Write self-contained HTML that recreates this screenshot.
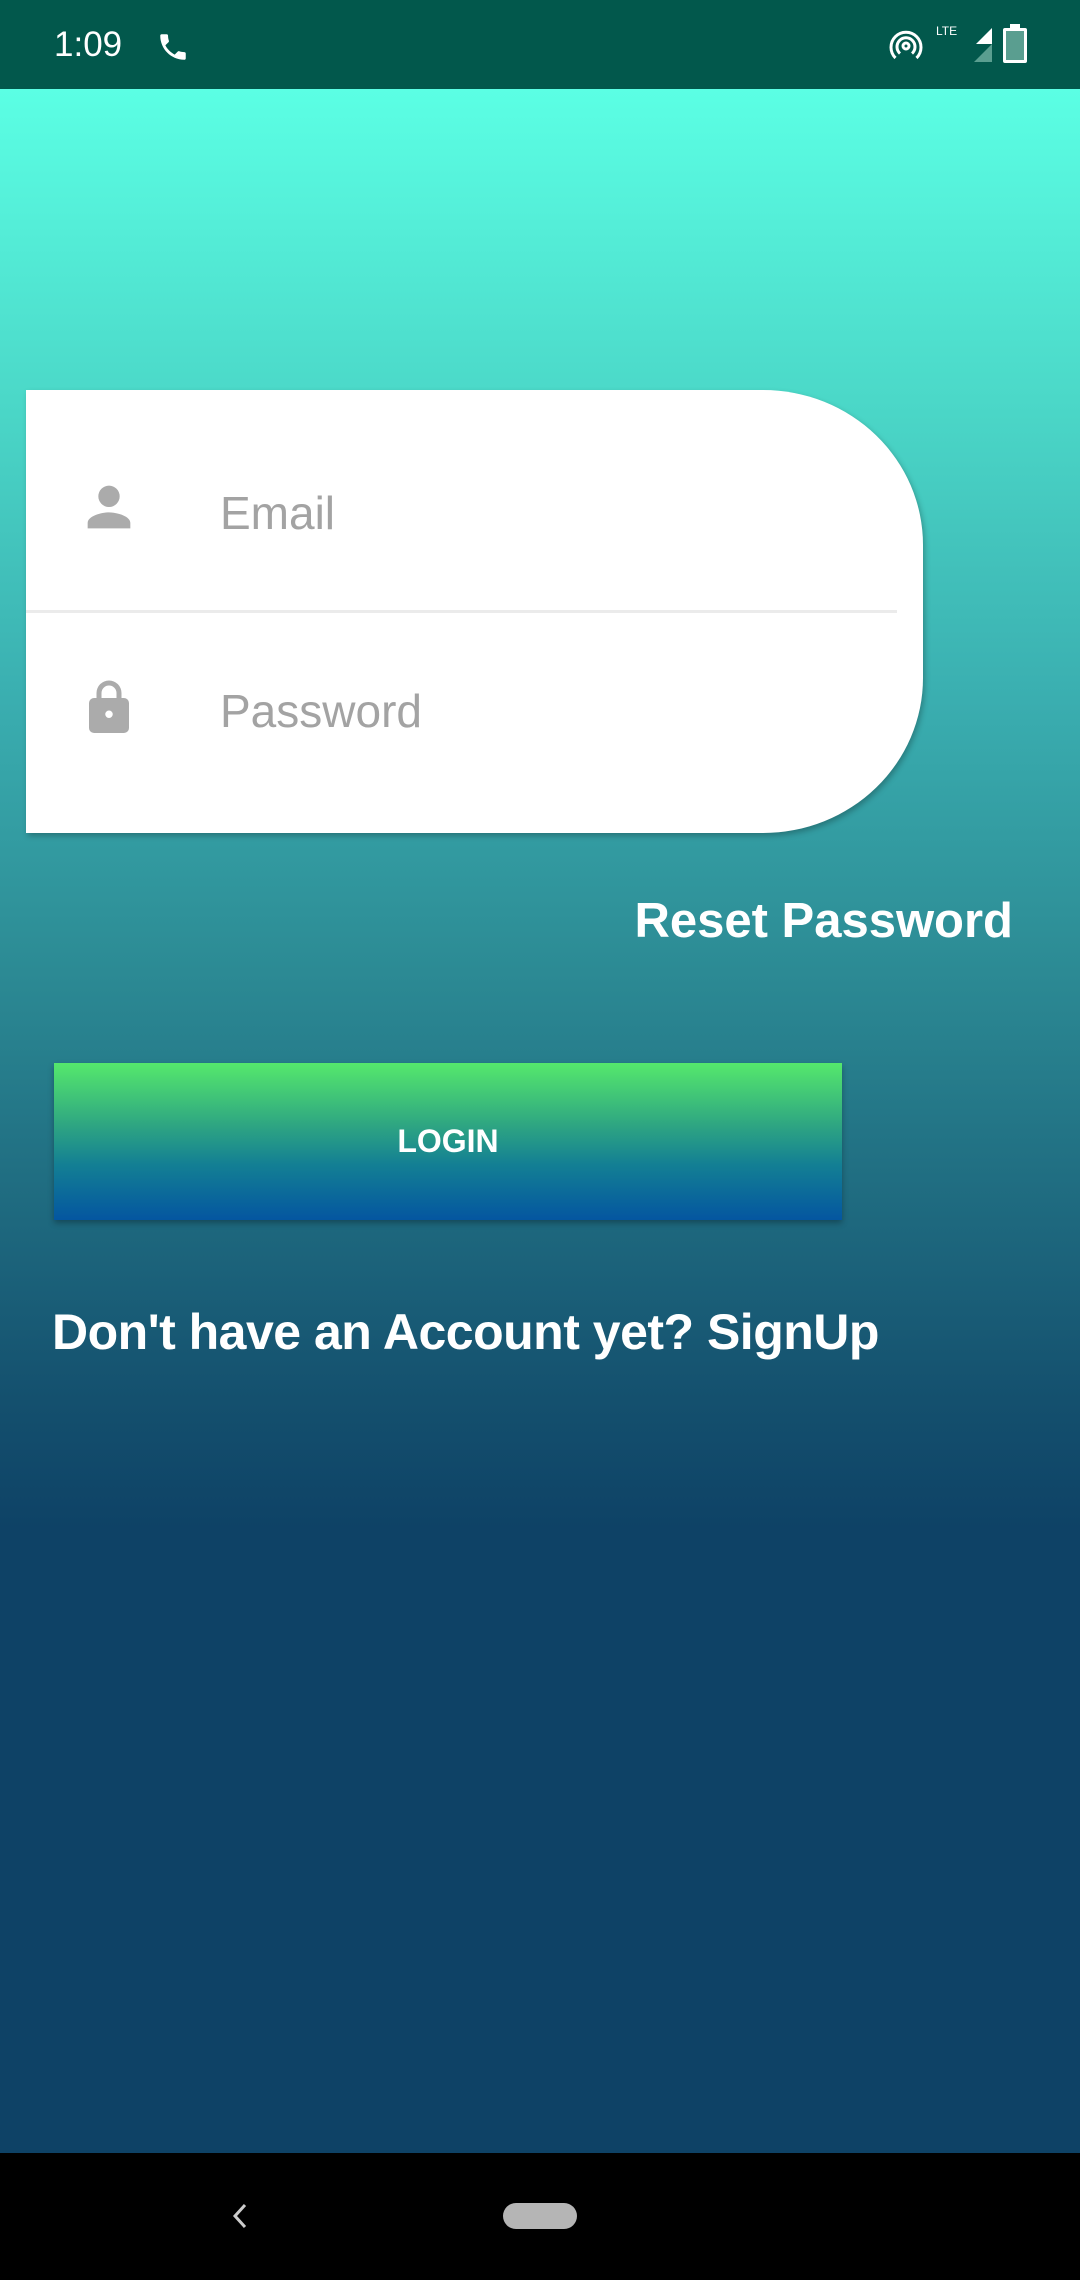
<!DOCTYPE html>
<html><head><meta charset="utf-8"><style>
*{margin:0;padding:0;box-sizing:border-box}
body{width:1080px;height:2280px;overflow:hidden;position:relative;font-family:"Liberation Sans",Roboto,sans-serif;
background:linear-gradient(to bottom,#5bffe4 89px,#4bd8c8 400px,#3aaeb0 700px,#2d8d96 950px,#1f6b80 1200px,#14506e 1400px,#0e4266 1530px,#0e4266 2153px)}
.sb{position:absolute;left:0;top:0;width:1080px;height:89px;background:#02584c;color:#fff}
.card{position:absolute;left:26px;top:390px;width:897px;height:443px;background:#fff;border-radius:0 160px 160px 0/0 155px 155px 0;box-shadow:2px 3px 6px rgba(0,0,0,.25)}
.div{position:absolute;left:0;top:220px;width:871px;height:3px;background:#ebebeb}
.ph{position:absolute;left:194px;color:#a3a3a3;font-size:46px}
.reset{position:absolute;right:67px;top:893px;color:#fff;font-weight:bold;font-size:49px}
.btn{position:absolute;left:54px;top:1063px;width:788px;height:157px;background:linear-gradient(#55e86c,#2ea582 40%,#137f94 65%,#0456a0);box-shadow:0 3px 6px rgba(0,0,0,.3);color:#fff;font-size:32px;font-weight:bold;text-align:center;line-height:157px}
.su{position:absolute;left:52px;top:1303px;color:#fff;font-weight:bold;font-size:50px;letter-spacing:-0.5px}
.nav{position:absolute;left:0;top:2153px;width:1080px;height:127px;background:#000}
</style></head><body>
<div class="sb">
<div style="position:absolute;left:54px;top:25px;font-size:35px">1:09</div>
<svg style="position:absolute;left:156px;top:30px" width="34" height="34" viewBox="0 0 24 24"><path fill="#fff" d="M6.6 10.8c1.4 2.8 3.8 5.1 6.6 6.6l2.2-2.2c.3-.3.7-.4 1-.2 1.1.4 2.3.6 3.6.6.6 0 1 .4 1 1V20c0 .6-.4 1-1 1C10.6 21 3 13.4 3 4c0-.6.4-1 1-1h3.5c.6 0 1 .4 1 1 0 1.3.2 2.5.6 3.6.1.3 0 .7-.2 1z"/></svg>
<svg style="position:absolute;left:888px;top:28px" width="36" height="36" viewBox="0 0 24 24"><g fill="none" stroke="#fff" stroke-width="2"><circle cx="12" cy="12" r="2"/><path d="M8 17a6 6 0 1 1 8 0M5 20a10 10 0 1 1 14 0"/></g></svg>
<div style="position:absolute;left:936px;top:24px;color:#fff;font-size:12px">LTE</div>
<svg style="position:absolute;left:958px;top:28px" width="34" height="34" viewBox="0 0 34 34"><path d="M34 0V16H18z" fill="#fff"/><path d="M34 16V34H16z" fill="#5a9e90"/></svg>
<div style="position:absolute;left:1003px;top:28px;width:24px;height:35px;border:3px solid #fff;border-radius:2px;background:#5a9e90"></div>
<div style="position:absolute;left:1010px;top:24px;width:10px;height:5px;background:#fff"></div>
</div>
<div class="card">
<svg style="position:absolute;left:51px;top:85px" width="64" height="64" viewBox="0 0 24 24"><path fill="#ababab" d="M12 12a4 4 0 1 0 0-8 4 4 0 0 0 0 8zm0 2c-2.7 0-8 1.3-8 4v2h16v-2c0-2.7-5.3-4-8-4z"/></svg>
<div class="ph" style="top:96px">Email</div>
<div class="div"></div>
<svg style="position:absolute;left:53px;top:288px" width="60" height="60" viewBox="0 0 24 24"><path fill="#ababab" d="M18 8h-1V6a5 5 0 0 0-10 0v2H6a2 2 0 0 0-2 2v10a2 2 0 0 0 2 2h12a2 2 0 0 0 2-2V10a2 2 0 0 0-2-2zM9 6a3 3 0 0 1 6 0v2H9zm3 10a1.5 1.5 0 1 1 0-3 1.5 1.5 0 0 1 0 3z"/></svg>
<div class="ph" style="top:294px">Password</div>
</div>
<div class="reset">Reset Password</div>
<div class="btn">LOGIN</div>
<div class="su">Don't have an Account yet? SignUp</div>
<div class="nav">
<svg style="position:absolute;left:228px;top:48px" width="24" height="30" viewBox="0 0 24 30"><path d="M17 4L7 15l10 11" fill="none" stroke="#ccc" stroke-width="3"/></svg>
<div style="position:absolute;left:503px;top:50px;width:74px;height:26px;border-radius:13px;background:#b5b5b5"></div>
</div>
</body></html>
